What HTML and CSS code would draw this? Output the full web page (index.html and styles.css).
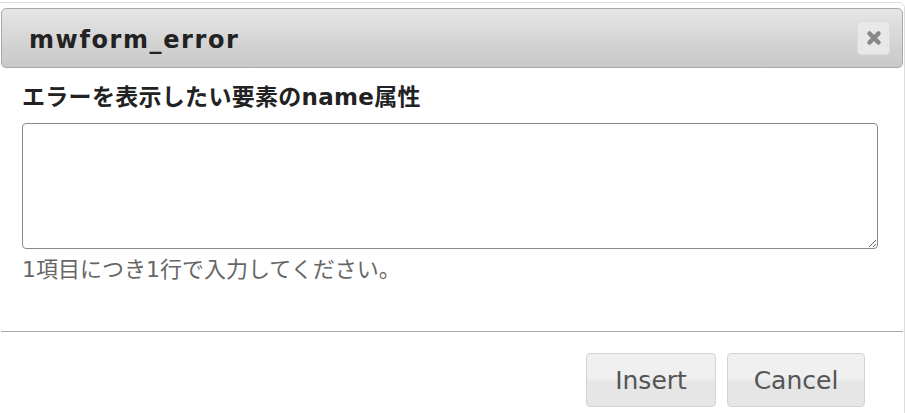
FILE: index.html
```html
<!DOCTYPE html>
<html lang="ja">
<head>
    <meta charset="UTF-8">
    <meta name="viewport" content="width=device-width, initial-scale=1.0">
    <title>mwform_error</title>
    <link rel="stylesheet" href="styles.css">
</head>
<body>

    <!-- Dialog -->
    <div class="dialog">

        <!-- Title Bar -->
        <div class="dialog-titlebar">
            <span class="dialog-title">mwform_error</span>
            <button class="dialog-close" type="button" title="Close">
                <svg width="16" height="16" viewBox="0 0 16 16">
                    <path d="M3.5 3.5 L12.5 12.5 M12.5 3.5 L3.5 12.5" stroke="#888" stroke-width="4.5" stroke-linecap="round"/>
                </svg>
            </button>
        </div>

        <!-- Content -->
        <div class="dialog-content">
            <label class="field-label" for="error-name">エラーを表示したい要素のname属性</label>
            <textarea id="error-name" class="field-input"></textarea>
            <p class="field-help">1項目につき1行で入力してください。</p>
        </div>

        <!-- Buttons -->
        <div class="dialog-buttonpane">
            <button class="dialog-button btn-insert" type="button">Insert</button>
            <button class="dialog-button btn-cancel" type="button">Cancel</button>
        </div>
    </div>

</body>
</html>
```

FILE: styles.css
```css
/* Basic Reset */
* {
    margin: 0;
    padding: 0;
    box-sizing: border-box;
}

body {
    font-family: "DejaVu Sans", "Noto Sans CJK JP", sans-serif;
    background-color: #ffffff;
    color: #222;
    overflow: hidden;
}

/* Dialog Frame */
.dialog {
    width: 909px;
    margin: 2px 0 0 -4px;
    padding: 5px 1px 0 4px;
    border: 1px solid #dddddd;
    border-radius: 6px;
}

/* Title Bar */
.dialog-titlebar {
    display: flex;
    justify-content: space-between;
    align-items: flex-start;
    height: 60px;
    padding: 0 12px 0 27px;
    border: 1px solid #aaaaaa;
    border-radius: 5px;
    background: linear-gradient(#e6e6e6, #d0d0d0 70%, #c9c9c9);
}

.dialog-title {
    margin-top: 17px;
    font-size: 24px;
    font-weight: bold;
    line-height: 28px;
    letter-spacing: 1.6px;
    color: #222;
}

.dialog-close {
    display: flex;
    align-items: center;
    justify-content: center;
    width: 33px;
    height: 34px;
    margin-top: 12px;
    border: 1px solid #dcdcdc;
    border-radius: 4px;
    background-color: #e8e8e8;
    cursor: pointer;
}

/* Content */
.dialog-content {
    padding: 14px 25px 0 21px;
}

.field-label {
    display: block;
    font-size: 23px;
    font-weight: bold;
    line-height: 30px;
    letter-spacing: 0.3px;
    color: #222;
}

.field-input {
    display: block;
    width: 100%;
    height: 126px;
    margin-top: 11px;
    padding: 6px;
    border: 1px solid #8a8a8a;
    border-radius: 4px;
    font-family: inherit;
    font-size: 20px;
}

.field-help {
    margin-top: 6px;
    font-size: 22px;
    line-height: 30px;
    color: #666;
}

/* Button Pane */
.dialog-buttonpane {
    display: flex;
    justify-content: flex-end;
    gap: 11px;
    margin-top: 46px;
    padding: 21px 38px 10px 0;
    border-top: 1px solid #aaaaaa;
}

.dialog-button {
    height: 54px;
    padding: 0;
    border: 1px solid #d3d3d3;
    border-radius: 4px;
    background: linear-gradient(#f0f0f0 45%, #e6e6e6 55%);
    font-family: inherit;
    font-size: 25px;
    color: #555;
    cursor: pointer;
}

.btn-insert {
    width: 130px;
}

.btn-cancel {
    width: 138px;
}
```
